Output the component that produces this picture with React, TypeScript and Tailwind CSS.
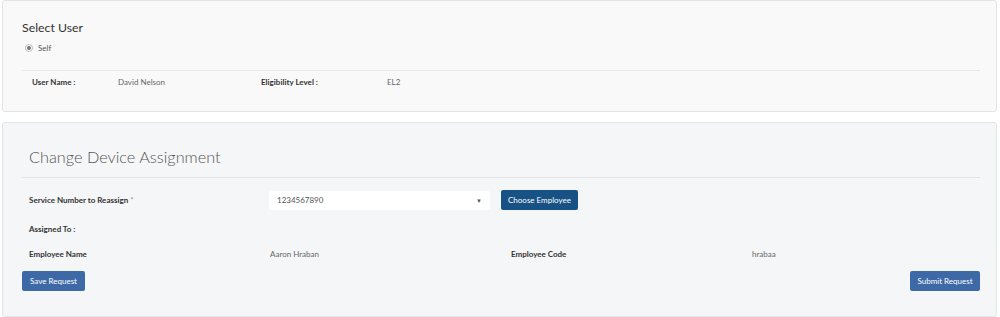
export default function App() {
  return (
    <div
      className="w-[1000px] h-[317px] bg-white overflow-hidden text-[#333]"
      style={{ fontFamily: "Lato, 'Open Sans', sans-serif" }}
    >
      {/* select user panel */}
      <div className="ml-[2px] w-[995px] h-[112px] bg-[#f9f9f9] border border-[#e2e4e6] rounded-[3px] px-[19px]">
        <div className="pt-[18px] text-[12.3px] leading-[18px] text-[#333]">Select User</div>
        <div className="mt-[1px] flex items-center h-[20px] pl-[3px] gap-[5px]">
          <span className="w-[8px] h-[8px] rounded-full border border-[#bbb] bg-white flex items-center justify-center">
            <span className="w-[4px] h-[4px] rounded-full bg-[#777]" />
          </span>
          <span className="text-[8px] text-[#555]">Self</span>
        </div>
        <div className="mt-[12px] w-[958px] border-t border-[#e6e7e8]" />
        <div className="mt-[4px] flex items-center h-[14px] text-[8px] pl-[10px]">
          <span className="w-[86px] font-bold text-[#333]">User Name :</span>
          <span className="w-[143px] text-[#666]">David Nelson</span>
          <span className="w-[126px] font-bold text-[#333]">Eligibility Level :</span>
          <span className="text-[#666]">EL2</span>
        </div>
      </div>

      {/* change device assignment panel */}
      <div className="mt-[10px] ml-[2px] w-[995px] h-[195px] bg-[#f5f6f7] border border-[#e2e4e6] rounded-[3px] px-[19px]">
        <div className="pt-[23px] pl-[7px] text-[16.3px] leading-[22px] font-light text-[#555]">
          Change Device Assignment
        </div>
        <div className="mt-[9px] w-[958px] border-t border-[#e3e4e5]" />
        <div className="mt-[12px] flex items-center h-[20px] text-[8px] pl-[7px]">
          <span className="w-[240px] font-bold text-[#333]">
            Service Number to Reassign <span className="font-normal text-[#999]">*</span>
          </span>
          <div className="w-[221px] h-[19px] bg-white rounded-[2px] flex items-center justify-between px-[8px] text-[#555]">
            <span>1234567890</span>
            <span className="text-[6px] text-[#555]">▼</span>
          </div>
          <button className="ml-[11px] h-[20px] px-[7px] rounded-[2px] bg-[#185183] text-white text-[8px]">
            Choose Employee
          </button>
        </div>
        <div className="mt-[14px] h-[10px] flex items-center pl-[7px] text-[8px] font-bold text-[#333]">
          Assigned To :
        </div>
        <div className="mt-[15px] h-[10px] flex items-center pl-[7px] text-[8px]">
          <span className="w-[241px] font-bold text-[#333]">Employee Name</span>
          <span className="w-[241px] text-[#666]">Aaron Hraban</span>
          <span className="w-[241px] font-bold text-[#333]">Employee Code</span>
          <span className="text-[#666]">hrabaa</span>
        </div>
        <div className="mt-[12px] w-[958px] flex justify-between">
          <button className="h-[20px] w-[63px] rounded-[2px] bg-[#3e69a7] text-white text-[8px]">
            Save Request
          </button>
          <button className="h-[20px] w-[70px] rounded-[2px] bg-[#3e69a7] text-white text-[8px]">
            Submit Request
          </button>
        </div>
      </div>
    </div>
  );
}
